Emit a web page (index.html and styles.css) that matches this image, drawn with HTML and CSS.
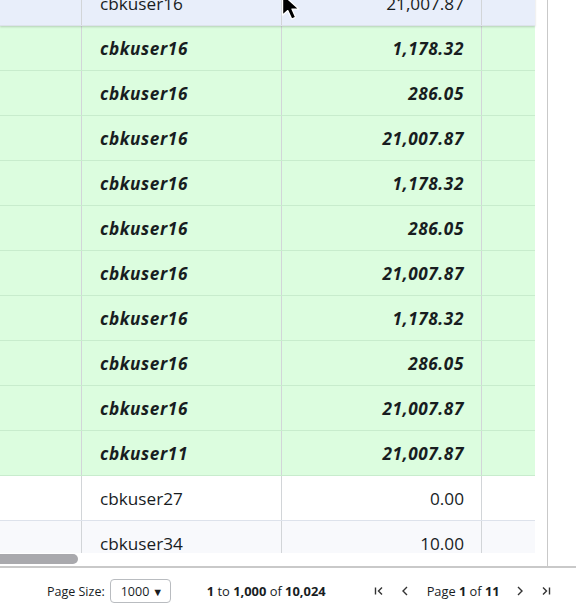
FILE: index.html
```html
<!DOCTYPE html>
<html lang="en">
<head>
  <meta charset="UTF-8" />
  <title>Users Grid</title>
  <link rel="stylesheet" href="styles.css">
</head>
<body>
  <div class="grid">
    <!-- Grid body -->
    <div class="grid-body">
      <div class="viewport">
        <div class="rows">
          <div class="row row-hover">
            <div class="cell c1"></div>
            <div class="cell c2">cbkuser16</div>
            <div class="cell c3">21,007.87</div>
            <div class="cell c4"></div>
          </div>
          <div class="row row-flag">
            <div class="cell c1"></div><div class="cell c2">cbkuser16</div><div class="cell c3">1,178.32</div><div class="cell c4"></div>
          </div>
          <div class="row row-flag">
            <div class="cell c1"></div><div class="cell c2">cbkuser16</div><div class="cell c3">286.05</div><div class="cell c4"></div>
          </div>
          <div class="row row-flag">
            <div class="cell c1"></div><div class="cell c2">cbkuser16</div><div class="cell c3">21,007.87</div><div class="cell c4"></div>
          </div>
          <div class="row row-flag">
            <div class="cell c1"></div><div class="cell c2">cbkuser16</div><div class="cell c3">1,178.32</div><div class="cell c4"></div>
          </div>
          <div class="row row-flag">
            <div class="cell c1"></div><div class="cell c2">cbkuser16</div><div class="cell c3">286.05</div><div class="cell c4"></div>
          </div>
          <div class="row row-flag">
            <div class="cell c1"></div><div class="cell c2">cbkuser16</div><div class="cell c3">21,007.87</div><div class="cell c4"></div>
          </div>
          <div class="row row-flag">
            <div class="cell c1"></div><div class="cell c2">cbkuser16</div><div class="cell c3">1,178.32</div><div class="cell c4"></div>
          </div>
          <div class="row row-flag">
            <div class="cell c1"></div><div class="cell c2">cbkuser16</div><div class="cell c3">286.05</div><div class="cell c4"></div>
          </div>
          <div class="row row-flag">
            <div class="cell c1"></div><div class="cell c2">cbkuser16</div><div class="cell c3">21,007.87</div><div class="cell c4"></div>
          </div>
          <div class="row row-flag">
            <div class="cell c1"></div><div class="cell c2">cbkuser11</div><div class="cell c3">21,007.87</div><div class="cell c4"></div>
          </div>
          <div class="row">
            <div class="cell c1"></div><div class="cell c2">cbkuser27</div><div class="cell c3">0.00</div><div class="cell c4"></div>
          </div>
          <div class="row row-odd">
            <div class="cell c1"></div><div class="cell c2">cbkuser34</div><div class="cell c3">10.00</div><div class="cell c4"></div>
          </div>
        </div>
        <div class="vscroll"></div>
      </div>
      <div class="hscroll"><div class="hthumb"></div></div>

      <!-- mouse pointer over the grid -->
      <svg class="pointer" width="24" height="30" viewBox="0 0 18 23">
        <path d="M1 1 L1 17 L5 13.5 L8 20 L11 18.6 L8.2 12.3 L13.5 12.3 Z" fill="#000" stroke="#fff" stroke-width="1" stroke-linejoin="round"/>
      </svg>
    </div>

    <!-- Paging panel -->
    <div class="paging">
      <span class="page-size">Page Size:</span>
      <div class="select">1000 <span class="caret">&#9660;</span></div>
      <span class="summary"><b>1</b> to <b>1,000</b> of <b>10,024</b></span>
      <div class="pager">
        <svg class="pbtn" width="12" height="12" viewBox="0 0 12 12"><path d="M2.5 2.5 V9.5 M9 2.5 L5.5 6 L9 9.5" fill="none" stroke="#333" stroke-width="1.4"/></svg>
        <svg class="pbtn" width="12" height="12" viewBox="0 0 12 12"><path d="M8 2 L4 6 L8 10" fill="none" stroke="#333" stroke-width="1.4"/></svg>
        <span class="page-desc">Page <b>1</b> of <b>11</b></span>
        <svg class="pbtn" width="12" height="12" viewBox="0 0 12 12"><path d="M4 2 L8 6 L4 10" fill="none" stroke="#333" stroke-width="1.4"/></svg>
        <svg class="pbtn" width="12" height="12" viewBox="0 0 12 12"><path d="M3 2.5 L6.5 6 L3 9.5 M9.5 2.5 V9.5" fill="none" stroke="#333" stroke-width="1.4"/></svg>
      </div>
    </div>
  </div>
</body>
</html>
```

FILE: styles.css
```css
* { margin: 0; padding: 0; box-sizing: border-box; }

body, html {
  height: 100%;
  background: #ffffff;
  font-family: 'Open Sans', 'Noto Sans', sans-serif;
  color: #181d1f;
  overflow: hidden;
}

.grid {
  width: 576px;
  height: 610px;
  display: flex;
  flex-direction: column;
}

.grid-body {
  position: relative;
  width: 548px;
  height: 566px;
  border-right: 1px solid #c9c9c9;
  overflow: hidden;
}

.viewport {
  display: flex;
  height: 553px;
  overflow: hidden;
}

.rows {
  width: 535px;
  margin-top: -19px;
}

.vscroll {
  width: 12px;
  background: #ffffff;
}

.row {
  display: flex;
  height: 45px;
  border-bottom: 1px solid #dde2eb;
  background: #ffffff;
  font-size: 17.2px;
}

.row-odd { background: #f8f9fc; }

.row-hover {
  position: relative;
  z-index: 1;
  background: #e8eefa;
  box-shadow: 0 1px 2px rgba(0,0,0,0.18);
}

.row-flag {
  background: #dcfddf;
  border-bottom-color: #c8eccd;
  font-weight: bold;
  font-style: italic;
  letter-spacing: 0.6px;
}

.cell {
  display: flex;
  align-items: center;
  height: 100%;
  border-right: 1px solid #d2d5d8;
  white-space: nowrap;
}

.c1 { width: 82px; }
.c2 { width: 200px; padding-left: 18px; }
.c3 { width: 200px; justify-content: flex-end; padding-right: 17px; }
.c4 { flex: 1; border-right: none; }

.hscroll {
  height: 13px;
  padding-top: 1px;
  background: #ffffff;
}

.hthumb {
  width: 78px;
  height: 10px;
  background: #a9a9ad;
  border-radius: 0 6px 6px 0;
}

.pointer {
  position: absolute;
  z-index: 2;
  left: 281px;
  top: -7px;
}

.paging {
  height: 44px;
  border-top: 2px solid #c9c9c9;
  display: flex;
  align-items: center;
  padding-top: 4px;
  padding-left: 47px;
  font-size: 12.5px;
  color: #181d1f;
}

.page-size { margin-right: 6px; }

.select {
  width: 61px;
  height: 24px;
  margin-left: -1px;
  border: 1px solid #b9bcc0;
  border-radius: 4px;
  display: flex;
  align-items: center;
  padding-left: 10px;
  font-size: 12.5px;
}

.caret {
  font-size: 11px;
  margin-left: 3px;
}

.summary {
  margin-left: 36px;
  font-size: 12.9px;
}

.pager {
  display: flex;
  align-items: center;
  margin-left: 40px;
}

.pbtn { margin: 0 7px; }

.page-desc { margin: 0 7px 0 9px; font-size: 12.8px; }
```
